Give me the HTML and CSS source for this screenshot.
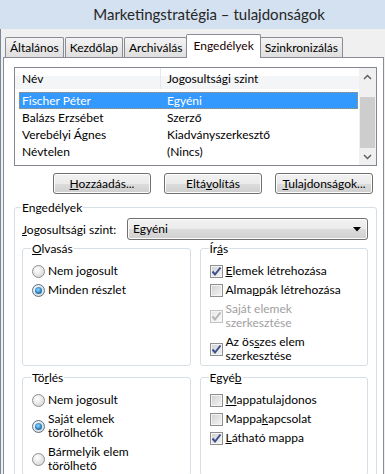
FILE: index.html
```html
<!DOCTYPE html>
<html lang="hu">
<head>
    <meta charset="utf-8"/>
    <meta name="viewport" content="width=device-width, initial-scale=1"/>
    <title>Marketingstratégia – tulajdonságok</title>
    <link rel="stylesheet" href="styles.css">
</head>
<body>

<div class="window">
    <div class="titlebar">Marketingstratégia – tulajdonságok</div>

    <div class="client">
        <!-- tab strip -->
        <div class="tabs">
            <div class="tab">Általános</div>
            <div class="tab">Kezdőlap</div>
            <div class="tab">Archiválás</div>
            <div class="tab tab--active">Engedélyek</div>
            <div class="tab">Szinkronizálás</div>
        </div>

        <div class="panel">
            <!-- users list -->
            <div class="listview">
                <div class="listview__main">
                    <div class="listview__header">
                        <div class="listview__head listview__head--name">Név</div>
                        <div class="listview__head">Jogosultsági szint</div>
                    </div>
                    <div class="listview__rows">
                        <div class="listview__row listview__row--selected">
                            <span class="listview__cell">Fischer Péter</span><span>Egyéni</span>
                        </div>
                        <div class="listview__row">
                            <span class="listview__cell">Balázs Erzsébet</span><span>Szerző</span>
                        </div>
                        <div class="listview__row">
                            <span class="listview__cell">Verebélyi Ágnes</span><span>Kiadványszerkesztő</span>
                        </div>
                        <div class="listview__row">
                            <span class="listview__cell">Névtelen</span><span>(Nincs)</span>
                        </div>
                    </div>
                </div>
                <div class="scrollbar">
                    <div class="scrollbar__btn">
                        <svg width="9" height="6" viewBox="0 0 9 6"><path d="M1 5 L4.5 1.5 L8 5" fill="none" stroke="#606060" stroke-width="1.5"/></svg>
                    </div>
                    <div class="scrollbar__track"><div class="scrollbar__thumb"></div></div>
                    <div class="scrollbar__btn">
                        <svg width="9" height="6" viewBox="0 0 9 6"><path d="M1 1 L4.5 4.5 L8 1" fill="none" stroke="#606060" stroke-width="1.5"/></svg>
                    </div>
                </div>
            </div>

            <div class="buttons">
                <button class="button"><u>H</u>ozzáadás...</button>
                <button class="button">Eltá<u>v</u>olítás</button>
                <button class="button"><u>T</u>ulajdonságok...</button>
            </div>

            <fieldset class="group group--main">
                <legend>Engedélyek</legend>

                <div class="level_row">
                    <label class="level_row__label"><u>J</u>ogosultsági szint:</label>
                    <div class="combo">
                        Egyéni
                        <svg class="combo__arrow" width="8" height="5" viewBox="0 0 8 5"><path d="M0 0 H8 L4 4.5 Z" fill="#000"/></svg>
                    </div>
                </div>

                <div class="subgroups">
                    <fieldset class="group group--sub">
                        <legend><u>O</u>lvasás</legend>
                        <div class="option"><span class="radio"></span>Nem jogosult</div>
                        <div class="option"><span class="radio radio--on"></span>Minden részlet</div>
                    </fieldset>

                    <fieldset class="group group--sub">
                        <legend>Ír<u>á</u>s</legend>
                        <div class="option">
                            <span class="check"><svg width="11" height="11" viewBox="0 0 11 11"><path d="M1.5 5.5 L4 8.5 L9.5 1.5" fill="none" stroke="#3a4f8c" stroke-width="2"/></svg></span>
                            <span><u>E</u>lemek létrehozása</span>
                        </div>
                        <div class="option">
                            <span class="check"></span>
                            <span>Alma<u>p</u>pák létrehozása</span>
                        </div>
                        <div class="option option--disabled">
                            <span class="check check--disabled"><svg width="11" height="11" viewBox="0 0 11 11"><path d="M1.5 5.5 L4 8.5 L9.5 1.5" fill="none" stroke="#b4b4b4" stroke-width="2"/></svg></span>
                            <span>Sa<u>j</u>át elemek<br>szerkesztése</span>
                        </div>
                        <div class="option">
                            <span class="check"><svg width="11" height="11" viewBox="0 0 11 11"><path d="M1.5 5.5 L4 8.5 L9.5 1.5" fill="none" stroke="#3a4f8c" stroke-width="2"/></svg></span>
                            <span>Az ös<u>s</u>zes elem<br>szerkesztése</span>
                        </div>
                    </fieldset>

                    <fieldset class="group group--sub">
                        <legend>Tö<u>r</u>lés</legend>
                        <div class="option"><span class="radio"></span>Nem jogosult</div>
                        <div class="option"><span class="radio radio--on"></span><span>Saját elemek<br>törölhetők</span></div>
                        <div class="option"><span class="radio"></span><span>Bármelyik elem<br>törölhető</span></div>
                    </fieldset>

                    <fieldset class="group group--sub">
                        <legend>Egyé<u>b</u></legend>
                        <div class="option">
                            <span class="check"></span>
                            <span><u>M</u>appatulajdonos</span>
                        </div>
                        <div class="option">
                            <span class="check"></span>
                            <span>Mappa<u>k</u>apcsolat</span>
                        </div>
                        <div class="option">
                            <span class="check"><svg width="11" height="11" viewBox="0 0 11 11"><path d="M1.5 5.5 L4 8.5 L9.5 1.5" fill="none" stroke="#3a4f8c" stroke-width="2"/></svg></span>
                            <span><u>L</u>átható mappa</span>
                        </div>
                    </fieldset>
                </div>
            </fieldset>
        </div>
    </div>
</div>

</body>
</html>
```

FILE: styles.css
```css
* {
    box-sizing: border-box;
}

body {
    margin: 0;
    overflow: hidden;
    background-color: #c9d8ea;
    font-family: Lato, "Liberation Sans", sans-serif;
    font-size: 12px;
    color: #000;
}

.window {
    width: 385px;
    height: 474px;
    display: flex;
    flex-direction: column;
    overflow: hidden;
    background: linear-gradient(#d4e1f0, #c8d7ea);
}

.titlebar {
    height: 29px;
    line-height: 29px;
    padding-left: 33px;
    text-align: center;
    font-size: 15px;
    color: #262626;
}

.client {
    flex: 1;
    min-height: 0;
    display: flex;
    flex-direction: column;
    background-color: #f0f0f0;
    border-left: 1px solid #7b8796;
    padding-left: 2px;
}

/* tabs */
.tabs {
    height: 28px;
    padding: 5px 0 0 2px;
    display: flex;
    align-items: flex-end;
}

.tab {
    height: 20px;
    line-height: 19px;
    padding: 0 4px;
    margin-right: 1px;
    border: 1px solid #898c95;
    border-bottom: 0;
    border-radius: 2px 2px 0 0;
    background: linear-gradient(#f4f4f4, #e9e9e9 50%, #dfdfdf);
}

.tab--active {
    position: relative;
    z-index: 1;
    height: 24px;
    line-height: 22px;
    padding: 0 6px;
    margin: 0 -1px -1px -2px;
    background: #fff;
    color: #1a0000;
}

.panel {
    flex: 1;
    width: 381px;
    padding: 9px 0 0 10px;
    background-color: #fff;
    border: 1px solid #898c95;
}

/* list view */
.listview {
    width: 363px;
    height: 99px;
    display: flex;
    border: 1px solid #828790;
}

.listview__main {
    flex: 1;
}

.listview__header {
    height: 21px;
    display: flex;
    background: linear-gradient(#fff 40%, #f4f5f7 40%);
}

.listview__head {
    line-height: 21px;
    padding-left: 6px;
}

.listview__head--name {
    width: 146px;
    padding-left: 7px;
    border-right: 1px solid #e4e7eb;
}

.listview__rows {
    padding-top: 3px;
}

.listview__row {
    height: 17px;
    line-height: 17px;
    margin: 0 1px 0 4px;
    padding-left: 3px;
    display: flex;
}

.listview__row--selected {
    background-color: #3399ff;
    color: #fff;
    outline: 1px dotted #c8904a;
    outline-offset: -1px;
}

.listview__cell {
    width: 145px;
}

.scrollbar {
    width: 17px;
    display: flex;
    flex-direction: column;
    background-color: #f0f0f0;
}

.scrollbar__btn {
    height: 17px;
    display: flex;
    align-items: center;
    justify-content: center;
}

.scrollbar__track {
    flex: 1;
    padding: 12px 1px 0;
}

.scrollbar__thumb {
    height: 51px;
    background-color: #cdcdcd;
}

/* push buttons */
.buttons {
    width: 363px;
    margin-top: 7px;
    padding-right: 4px;
    display: flex;
    justify-content: flex-end;
    gap: 13px;
}

.button {
    width: 98px;
    height: 21px;
    padding: 0;
    font: inherit;
    color: #000;
    border: 1px solid #707070;
    border-radius: 3px;
    background: linear-gradient(#f2f2f2, #ebebeb 50%, #dddddd 50%, #cfcfcf);
    box-shadow: inset 0 0 0 1px #fcfcfc;
}

/* group boxes */
.group {
    margin: 0;
    min-width: 0;
    border: 1px solid #d5dfe5;
    border-radius: 3px;
}

.group legend {
    padding: 0 1px;
    margin-left: -1px;
    line-height: 15px;
}

.group--main {
    width: 363px;
    height: 320px;
    margin-top: 6px;
    padding: 3px 8px 0 7px;
}

.group--sub {
    padding: 5px 4px 0 9px;
}

.level_row {
    height: 22px;
    display: flex;
    align-items: center;
}

.level_row__label {
    width: 105px;
}

.combo {
    flex: 1;
    height: 22px;
    line-height: 20px;
    padding: 0 6px 0 5px;
    display: flex;
    justify-content: space-between;
    align-items: center;
    border: 1px solid #707070;
    border-radius: 3px;
    background: linear-gradient(#f2f2f2, #ebebeb 50%, #dddddd 50%, #cfcfcf);
    box-shadow: inset 0 0 0 1px #fcfcfc;
}

.subgroups {
    margin-top: 1px;
    display: grid;
    grid-template-columns: 1fr 1fr;
    column-gap: 9px;
    row-gap: 4px;
}

.option {
    padding: 3px 0 2px;
    line-height: 14px;
    display: flex;
    align-items: center;
    gap: 3px;
}

.option--disabled {
    color: #a0a0a0;
}

.radio {
    flex: none;
    width: 13px;
    height: 13px;
    display: flex;
    align-items: center;
    justify-content: center;
    border: 1px solid #8f8f8f;
    border-radius: 50%;
    background: radial-gradient(circle at 40% 35%, #fff, #d6d6d6 85%);
}

.radio--on {
    border-color: #5a6f82;
}

.radio--on::after {
    content: "";
    width: 7px;
    height: 7px;
    border-radius: 50%;
    background: radial-gradient(circle at 45% 40%, #9fdcff, #2a8ad2 50%, #0f3f6a);
}

.check {
    flex: none;
    width: 13px;
    height: 13px;
    display: flex;
    align-items: center;
    justify-content: center;
    border: 1px solid #8e8f8f;
    background: linear-gradient(135deg, #cfcfcf, #f6f6f6);
    box-shadow: inset 0 0 0 1px #f4f4f4;
}

.check--disabled {
    border-color: #c3c3c3;
    background: linear-gradient(135deg, #e6e6e6, #fafafa);
}
```
